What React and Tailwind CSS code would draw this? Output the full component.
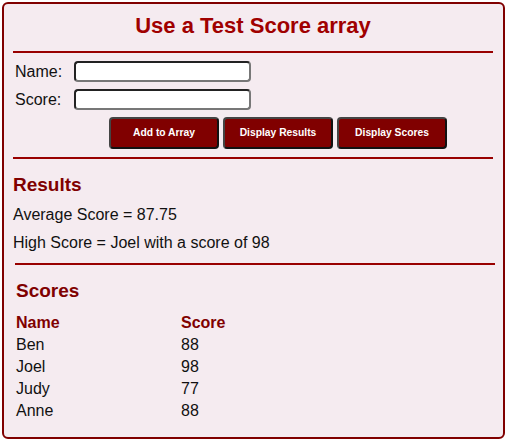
import { useState } from "react";

const initialScores = [
  { name: "Ben", score: 88 },
  { name: "Joel", score: 98 },
  { name: "Judy", score: 77 },
  { name: "Anne", score: 88 },
];

function App() {
  const [name, setName] = useState("");
  const [score, setScore] = useState("");
  const [scores] = useState(initialScores);

  const inputCls =
    "w-[177px] h-[21px] bg-white rounded-[4px] border-2 border-solid border-t-[#222] border-l-[#222] border-b-[#777] border-r-[#777] px-1 text-[13px] outline-none";
  const btnCls =
    "w-[110px] h-[32px] rounded-[4px] border-2 border-solid border-t-[#444] border-l-[#444] border-b-[#111] border-r-[#111] bg-[#800000] text-white text-[10.3px] font-bold";

  return (
    <div className="p-[2px] bg-white font-['Liberation_Sans',Arial,sans-serif] text-[#111]">
      <div className="w-[503px] border-2 border-solid border-[#800000] rounded-[6px] bg-[#f5ebf0] pt-[9px] pb-[13px] pl-[9px] pr-[10px]">
        {/* title */}
        <h1 className="text-center text-[22px] leading-[26px] font-bold text-[#a00000]">
          Use a Test Score array
        </h1>
        <div className="mt-[12px] h-[2px] bg-[#990000]" />

        {/* form */}
        <div className="mt-[8px] flex items-center h-[21px]">
          <label className="w-[61px] pl-[2px] text-[16px]">Name:</label>
          <input className={inputCls} value={name} onChange={(e) => setName(e.target.value)} />
        </div>
        <div className="mt-[7px] flex items-center h-[21px]">
          <label className="w-[61px] pl-[2px] text-[16px]">Score:</label>
          <input className={inputCls} value={score} onChange={(e) => setScore(e.target.value)} />
        </div>
        <div className="mt-[7px] ml-[96px] flex gap-[4px]">
          <button type="button" className={btnCls}>Add to Array</button>
          <button type="button" className={btnCls}>Display Results</button>
          <button type="button" className={btnCls}>Display Scores</button>
        </div>
        <div className="mt-[8px] h-[2px] bg-[#990000]" />

        {/* results */}
        <h2 className="mt-[15px] text-[19px] leading-[22px] font-bold text-[#800000]">Results</h2>
        <p className="mt-[10px] text-[16px] leading-[18px]">Average Score = 87.75</p>
        <p className="mt-[10px] text-[16px] leading-[18px]">High Score = Joel with a score of 98</p>

        {/* scores */}
        <div className="ml-[2px] mr-[-2px] pb-[2px]">
          <div className="mt-[11px] h-[2px] bg-[#990000]" />
          <h2 className="mt-[15px] ml-[1px] text-[19px] leading-[22px] font-bold text-[#800000]">Scores</h2>
          <table className="mt-[10px] ml-[1px] text-[16px] leading-[22px]">
            <thead>
              <tr className="text-left text-[#800000] font-bold">
                <th className="w-[165px] p-0 font-bold">Name</th>
                <th className="p-0 font-bold">Score</th>
              </tr>
            </thead>
            <tbody>
              {scores.map((s) => (
                <tr key={s.name}>
                  <td className="p-0">{s.name}</td>
                  <td className="p-0">{s.score}</td>
                </tr>
              ))}
            </tbody>
          </table>
        </div>
      </div>
    </div>
  );
}

export default App;
